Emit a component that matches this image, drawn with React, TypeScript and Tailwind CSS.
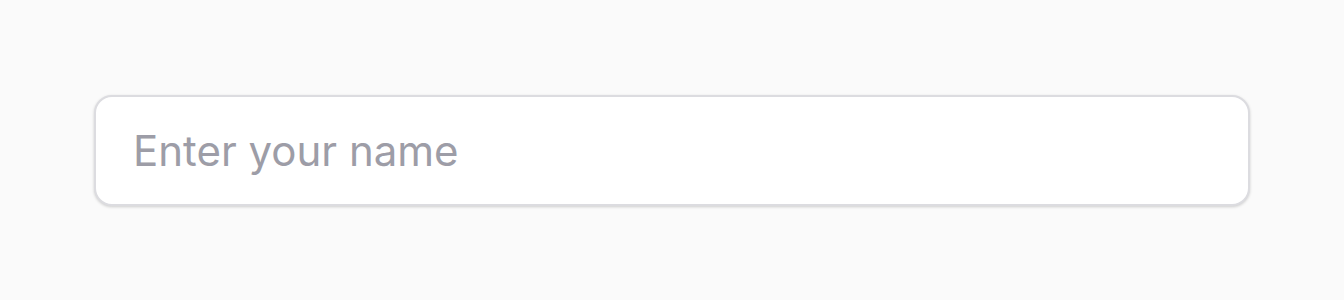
export default function App() {
  return (
    <div className="flex h-[300px] w-full items-center bg-[#fafafa] px-[94px]" style={{ fontFamily: "Inter, 'Noto Sans', sans-serif" }}>
      <input
        type="text"
        placeholder="Enter your name"
        className="h-[111px] w-full rounded-[18px] border-2 border-[#dcdce0] bg-white px-[37px] text-[42px] text-zinc-900 shadow-[0_1px_3px_rgba(0,0,0,0.18)] outline-none placeholder:text-[#9d9da7]"
      />
    </div>
  );
}
